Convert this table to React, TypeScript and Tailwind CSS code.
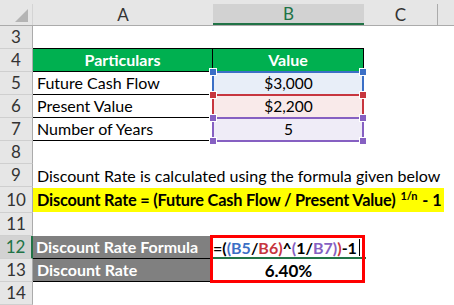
import React from "react";

const FONT = { fontFamily: "Lato, 'Liberation Sans', sans-serif" };

const RowHead = ({ n, active }: { n: number; active?: boolean }) => (
  <div
    className={
      active
        ? "w-[33px] shrink-0 flex items-center justify-center bg-[#d2d2d2] text-[#217346] border-r-2 border-r-[#217346] border-b border-b-[#cfcfcf] text-[17px]"
        : "w-[33px] shrink-0 flex items-center justify-center bg-[#e6e6e6] text-[#333] border-r border-r-[#ababab] border-b border-b-[#cfcfcf] text-[17px]"
    }
  >
    {n}
  </div>
);

// coloured range box drawn by Excel while a formula is being edited
const Range = ({ border, fill, z, bottom }: { border: string; fill: string; z: string; bottom?: boolean }) => (
  <div className={`absolute -left-[1px] -top-[1px] w-[152px] h-[25px] border-2 ${border} ${z}`}>
    <span className={`absolute -left-[5px] -top-[5px] w-[8px] h-[8px] border border-white ${fill}`} />
    <span className={`absolute -right-[5px] -top-[5px] w-[8px] h-[8px] border border-white ${fill}`} />
    {bottom && (
      <>
        <span className={`absolute -left-[5px] -bottom-[5px] w-[8px] h-[8px] border border-white ${fill}`} />
        <span className={`absolute -right-[5px] -bottom-[5px] w-[8px] h-[8px] border border-white ${fill}`} />
      </>
    )}
  </div>
);

export default function App() {
  return (
    <div className="w-[454px] h-[305px] overflow-hidden bg-white text-[16px] text-black" style={FONT}>
      {/* column headers */}
      <div className="flex h-[26px] bg-[#e6e6e6] border-b border-[#ababab] pt-[4px]">
        <div className="w-[33px] shrink-0 relative border-r border-[#d4d4d4]">
          <svg className="absolute left-0 top-0" width="33" height="22" viewBox="0 0 33 22">
            <polygon points="15,18 28,18 28,5" fill="#b4b4b4" />
          </svg>
        </div>
        <div className="w-[180px] shrink-0 flex items-center justify-center text-[17px] text-[#333]">A</div>
        <div className="w-[151px] shrink-0 flex items-center justify-center text-[17px] text-[#217346] bg-[#d2d2d2] border-b-2 border-[#217346]">
          B
        </div>
        <div className="w-[74px] shrink-0 flex items-center justify-center text-[17px] text-[#333] border-r border-[#ababab]">C</div>
        <div className="flex-1" />
      </div>

      {/* row 3 */}
      <div className="flex h-[23px]">
        <RowHead n={3} />
        <div className="w-[180px] shrink-0 border-b border-black" />
        <div className="w-[151px] shrink-0 border-b border-black" />
      </div>

      {/* row 4 */}
      <div className="flex h-[23px]">
        <RowHead n={4} />
        <div className="w-[180px] shrink-0 bg-[#00b050] border-b border-r border-black flex items-center justify-center font-bold text-white">
          Particulars
        </div>
        <div className="w-[151px] shrink-0 bg-[#00b050] border-b border-r border-black flex items-center justify-center font-bold text-white">
          Value
        </div>
      </div>

      {/* row 5 */}
      <div className="flex h-[23px]">
        <RowHead n={5} />
        <div className="w-[180px] shrink-0 border-b border-black flex items-center pl-[4px]">Future Cash Flow</div>
        <div className="w-[151px] shrink-0 relative bg-[#e8eef8] flex items-center justify-center text-[15.5px]">
          <Range border="border-[#3b6fc6]" fill="bg-[#3b6fc6]" z="z-10" />
          <span className="relative z-30">$3,000</span>
        </div>
      </div>

      {/* row 6 */}
      <div className="flex h-[23px]">
        <RowHead n={6} />
        <div className="w-[180px] shrink-0 border-b border-black flex items-center pl-[4px]">Present Value</div>
        <div className="w-[151px] shrink-0 relative bg-[#f9eaea] flex items-center justify-center text-[15.5px]">
          <Range border="border-[#c7363f]" fill="bg-[#c7363f]" z="z-20" />
          <span className="relative z-30">$2,200</span>
        </div>
      </div>

      {/* row 7 */}
      <div className="flex h-[23px]">
        <RowHead n={7} />
        <div className="w-[180px] shrink-0 border-b border-black flex items-center pl-[4px]">Number of Years</div>
        <div className="w-[151px] shrink-0 relative bg-[#efecf7] flex items-center justify-center text-[15.5px]">
          <Range border="border-[#8660c2]" fill="bg-[#8660c2]" z="z-20" bottom />
          <span className="relative z-30">5</span>
        </div>
      </div>

      {/* row 8 */}
      <div className="flex h-[23px]">
        <RowHead n={8} />
      </div>

      {/* row 9 */}
      <div className="flex h-[23px]">
        <RowHead n={9} />
        <div className="flex items-center pl-[4px] whitespace-nowrap">
          Discount Rate is calculated using the formula given below
        </div>
      </div>

      {/* row 10 */}
      <div className="flex h-[26px]">
        <RowHead n={10} />
        <div className="w-[411px] shrink-0 bg-[#ffff00] my-[1px] flex items-center pl-[4px] whitespace-nowrap font-bold">
          <span className="text-[16.3px] tracking-[-0.2px]">
            Discount Rate = (Future Cash Flow / Present Value)
            <span className="relative -top-[6px] text-[11px] ml-[5px]">1/n</span>
            <span className="ml-[5px]">-</span>
            <span className="ml-[4px]">1</span>
          </span>
        </div>
      </div>

      {/* row 11 */}
      <div className="flex h-[23px]">
        <RowHead n={11} />
      </div>

      {/* row 12 */}
      <div className="flex h-[23px]">
        <RowHead n={12} active />
        <div className="w-[179px] shrink-0 bg-[#808080] border-b border-r border-black flex items-center pl-[3px] font-bold text-white whitespace-nowrap overflow-hidden">
          Discount Rate Formula
        </div>
        <div className="w-[151px] shrink-0 relative flex items-center pl-[1px] font-bold whitespace-nowrap text-[16px]">
          <div className="absolute -left-[2px] -top-[1px] w-[155px] h-[48px] border-[3px] border-[#ff0000] z-10" />
          <div className="absolute left-0 -right-[3px] bottom-0 h-[2px] bg-[#217346]" />
          <span>=(</span>
          <span className="text-[#3b6fc6]">(B5</span>
          <span>/</span>
          <span className="text-[#c7363f]">B6)</span>
          <span>^</span>
          <span className="text-[#8660c2]">(</span>
          <span>1/</span>
          <span className="text-[#8660c2]">B7)</span>
          <span className="text-[#c7363f]">)</span>
          <span>-1</span>
          <span className="inline-block w-[1px] h-[17px] bg-black ml-[2px]" />
        </div>
      </div>

      {/* row 13 */}
      <div className="flex h-[23px]">
        <RowHead n={13} />
        <div className="w-[180px] shrink-0 bg-[#808080] border-b border-black flex items-center pl-[4px] font-bold text-white">
          Discount Rate
        </div>
        <div className="w-[151px] shrink-0 flex items-center justify-center font-bold text-[17px]">6.40%</div>
      </div>

      {/* row 14 */}
      <div className="flex h-[23px]">
        <RowHead n={14} />
      </div>
    </div>
  );
}
